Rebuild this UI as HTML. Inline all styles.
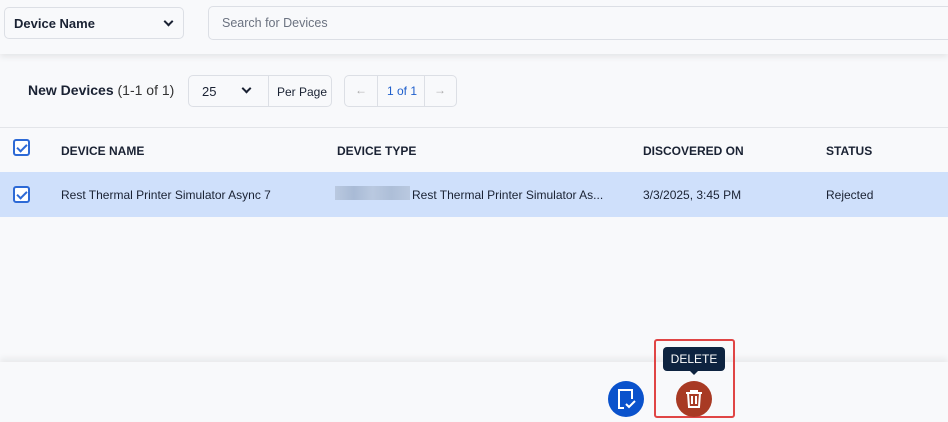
<!DOCTYPE html>
<html><head><style>
*{box-sizing:border-box;margin:0;padding:0}
body{width:948px;height:421px;background:#f8f9fb;font-family:"Liberation Sans",sans-serif;color:#1a2233;position:relative;overflow:hidden}
.top{position:absolute;left:0;top:0;width:948px;height:54px;background:#f8f9fb;box-shadow:0 3px 6px rgba(0,0,0,.08)}
.sel{position:absolute;left:4px;top:7px;width:180px;height:32px;border:1px solid #dcdfe5;border-radius:5px;background:#f8f9fb;font-size:13px;font-weight:bold;padding:8px 9px}
.search{position:absolute;left:208px;top:6px;width:750px;height:34px;border:1px solid #dcdfe5;border-radius:5px;font-size:12.5px;color:#6b7280;padding:9px 13px}
.chev{position:absolute;width:7px;height:7px;border-right:2px solid #1a2233;border-bottom:2px solid #1a2233;transform:rotate(45deg)}
.title{position:absolute;left:28px;top:82px;font-size:14px;font-weight:bold}
.title span{font-weight:normal;color:#333}
.pp{position:absolute;left:188px;top:75px;width:144px;height:32px;border:1px solid #dcdfe5;border-radius:5px;font-size:13px}
.pg{position:absolute;left:344px;top:75px;width:113px;height:32px;border:1px solid #dcdfe5;border-radius:5px;font-size:12px}
.hdr{position:absolute;left:0;top:127px;width:948px;height:45px;border-top:1px solid #e3e5e9;font-size:12px;font-weight:bold}
.row{position:absolute;left:0;top:172px;width:948px;height:45px;background:#cfe0fb;font-size:12px}
.cb{position:absolute;left:13px;width:17px;height:17px;border:2px solid #2d6ad6;border-radius:3px;background:#fff}
.cb:after{content:"";position:absolute;left:4px;top:1px;width:4px;height:8px;border-right:2px solid #2d6ad6;border-bottom:2px solid #2d6ad6;transform:rotate(45deg)}
.t{position:absolute}
.bot{position:absolute;left:0;top:362px;width:948px;height:59px;background:#f8f9fb;box-shadow:0 -4px 6px rgba(0,0,0,.06)}
</style></head><body>
<div class="top">
 <div class="sel">Device Name<div class="chev" style="left:160px;top:10px"></div></div>
 <div class="search">Search for Devices</div>
</div>
<div class="title">New Devices <span>(1-1 of 1)</span></div>
<div class="pp"><span class="t" style="left:13px;top:8px">25</span><div class="chev" style="left:54px;top:9px"></div><div class="t" style="left:79px;top:0;height:30px;border-left:1px solid #dcdfe5"></div><span class="t" style="left:88px;top:9px;font-size:12px">Per Page</span></div>
<div class="pg"><span class="t" style="left:10px;top:7px;color:#aaa">←</span><div class="t" style="left:32px;top:0;height:30px;border-left:1px solid #dcdfe5"></div><span class="t" style="left:42px;top:8px;color:#1f5fcc">1 of 1</span><div class="t" style="left:79px;top:0;height:30px;border-left:1px solid #dcdfe5"></div><span class="t" style="left:89px;top:7px;color:#aaa">→</span></div>
<div class="hdr"><div class="cb" style="top:11px"></div><span class="t" style="left:61px;top:16px">DEVICE NAME</span><span class="t" style="left:337px;top:16px">DEVICE TYPE</span><span class="t" style="left:643px;top:16px">DISCOVERED ON</span><span class="t" style="left:826px;top:16px">STATUS</span></div>
<div class="row"><div class="cb" style="top:14px"></div><span class="t" style="left:61px;top:16px">Rest Thermal Printer Simulator Async 7</span><div class="t" style="left:335px;top:14px;width:75px;height:14px;background:linear-gradient(90deg,#b4c3d9,#9fb1cc,#b4c3d9,#a5b6cf,#b4c3d9);opacity:.8"></div><span class="t" style="left:412px;top:16px">Rest Thermal Printer Simulator As...</span><span class="t" style="left:643px;top:16px">3/3/2025, 3:45 PM</span><span class="t" style="left:826px;top:16px">Rejected</span></div>
<div class="bot"></div>
<div class="t" style="left:654px;top:339px;width:81px;height:79px;border:2px solid #e04545;border-radius:3px"></div>
<div class="t" style="left:663px;top:347px;width:62px;height:24px;background:#0d2340;border-radius:4px;color:#fff;font-size:12px;text-align:center;line-height:24px">DELETE</div>
<div class="t" style="left:689px;top:370px;width:0;height:0;border-left:5px solid transparent;border-right:5px solid transparent;border-top:5px solid #0d2340"></div>
<div class="t" style="left:608px;top:381px;width:36px;height:36px;border-radius:50%;background:#0a52cc"><svg width="36" height="36" viewBox="0 0 36 36"><path d="M16 27H11V9H24V18" fill="none" stroke="#fff" stroke-width="2"/><path d="M18 23l3 3 6-6" fill="none" stroke="#fff" stroke-width="2"/></svg></div>
<div class="t" style="left:676px;top:381px;width:36px;height:36px;border-radius:50%;background:#a83a24"><svg width="36" height="36" viewBox="0 0 36 36"><path d="M10 12H26M15 12V10H21V12M12 12L13 26H23L24 12M16 15V23M20 15V23" fill="none" stroke="#fff" stroke-width="2"/></svg></div>
</body></html>
